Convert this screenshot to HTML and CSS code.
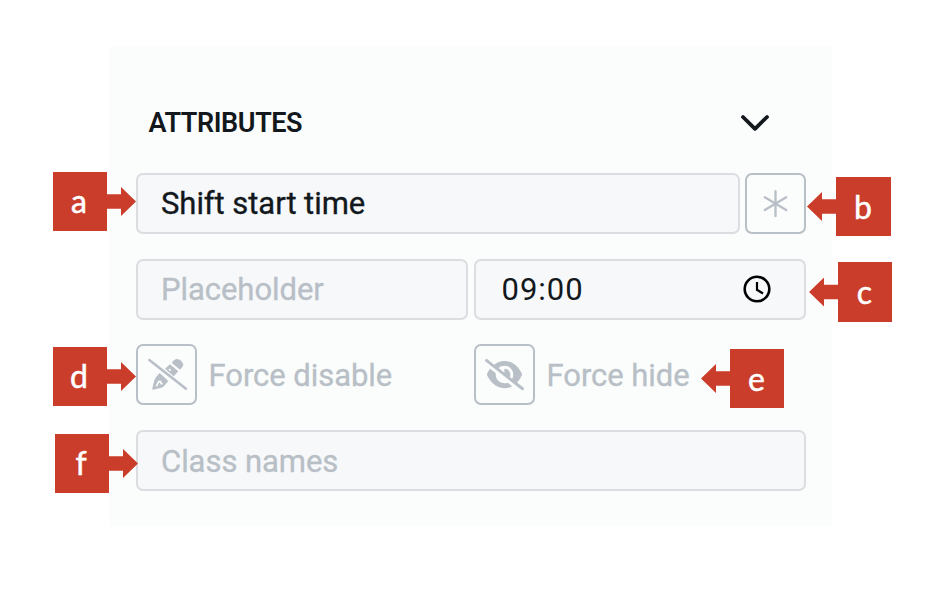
FILE: index.html
```html
<!DOCTYPE html>
<html lang="en">
<head>
<meta charset="utf-8">
<title>Attributes</title>
<link rel="stylesheet" href="styles.css">
</head>
<body>
<main class="panel">
  <header class="head">
    <h2 class="title">ATTRIBUTES</h2>
    <svg class="chevron" viewBox="0 0 30 18"><path d="M3 3 15 14.8 27 3"/></svg>
  </header>
  <div class="row label-row">
    <div class="field"><span>Shift start time</span></div>
    <div class="toggle"><svg viewBox="0 0 57 57"><path class="star" d="M28.500 16.200v25M17.800 22.300l21.400 12.800M39.200 22.300L17.800 35.100"/></svg></div>
  </div>
  <div class="row halves">
    <div class="field muted"><span>Placeholder</span></div>
    <div class="field time"><span>09:00</span>
      <svg class="clock" viewBox="0 0 28 28"><circle cx="14" cy="14" r="12.3"/><path d="M14 7v7.8l6 3.7"/></svg>
    </div>
  </div>
  <div class="row halves">
    <div class="option">
      <div class="toggle"><svg viewBox="21 35 171 171">
        <path class="solid" d="M122 85 129 78Q139 70 150 79Q161 89 154 98L147 106Z"/>
        <path class="solid" d="M117 90 142 111 128 126 102 103Z"/>
        <path class="gap" d="M114 104 119 109"/>
        <path class="solid" d="M86 116 112 140 100 154Q96 159 88 161L66 166Q63 166 64 162L70 138Q72 132 76 127Z"/>
        <path class="gap" d="M76 156 83 142 89 142 90 148 95 149"/>
        <path class="cut" d="M53 84 162 170"/>
        <path class="slash" d="M55 77 165 163"/>
      </svg></div>
      <span>Force disable</span>
    </div>
    <div class="option">
      <div class="toggle"><svg class="eye" viewBox="0 0 640 512"><path class="solid" d="M38.800 5.100C28.400-3.100 13.300-1.200 5.100 9.200S-1.200 34.700 9.200 42.900l592 464c10.400 8.200 25.500 6.300 33.700-4.100s6.300-25.500-4.100-33.700L525.600 386.700c39.600-40.600 66.400-86.100 79.900-118.400c3.300-7.900 3.300-16.700 0-24.600c-14.900-35.700-46.200-87.700-93-131.100C465.500 68.800 400.800 32 320 32c-68.200 0-125 26.300-169.300 60.800L38.800 5.100zM223.100 149.500C248.600 126.200 282.700 112 320 112c79.500 0 144 64.500 144 144c0 24.900-6.300 48.300-17.400 68.700L408 294.500c8.400-19.300 10.600-41.400 4.800-63.300c-11.100-41.500-47.800-69.400-88.600-71.100c-5.800-.2-9.200 6.100-7.400 11.700c2.100 6.400 3.300 13.200 3.300 20.300c0 10.200-2.400 19.800-6.600 28.300l-90.300-70.800zM373 389.900c-16.400 6.500-34.300 10.100-53 10.100c-79.500 0-144-64.500-144-144c0-6.900 .5-13.600 1.400-20.200L83.100 161.500C60.300 191.200 44 220.800 34.500 243.700c-3.300 7.900-3.300 16.700 0 24.600c14.900 35.700 46.200 87.700 93 131.100C174.500 443.200 239.200 480 320 480c47.800 0 89.900-12.900 126.200-32.500L373 389.900z"/></svg></div>
      <span>Force hide</span>
    </div>
  </div>
  <div class="row">
    <div class="field muted"><span>Class names</span></div>
  </div>
</main>
<div class="callout right at-a"><b>a</b><i></i></div>
<div class="callout left at-b"><i></i><b>b</b></div>
<div class="callout left at-c"><i></i><b>c</b></div>
<div class="callout right at-d"><b>d</b><i></i></div>
<div class="callout left at-e"><i></i><b>e</b></div>
<div class="callout right at-f"><b>f</b><i></i></div>
</body>
</html>
```
FILE: styles.css
```css
* { box-sizing: border-box; }
body {
  margin: 0;
  padding: 46px 0 0 110px;
  width: 928px;
  height: 590px;
  overflow: hidden;
  position: relative;
  background: #fff;
  color: #12181c;
  font-family: Roboto, sans-serif;
  font-size: 31px;
  line-height: 36px;
}
.panel {
  width: 722px;
  height: 480px;
  padding: 58px 26px 0 25.500px;
  background: #fbfdfc;
  display: flex;
  flex-direction: column;
  gap: 24.800px;
}
.head {
  height: 44px;
  padding: 0 36.500px 0 13px;
  display: flex;
  align-items: flex-start;
  justify-content: space-between;
}
.title { margin: 0; font-size: 27px; font-weight: 600; line-height: 38px; letter-spacing: -0.420px; }
.chevron { width: 30px; height: 18px; margin-top: 10px; }
.chevron path { fill: none; stroke: #12181c; stroke-width: 3.800; stroke-linecap: round; stroke-linejoin: round; }
.row { display: flex; gap: 5.500px; height: 61px; flex: none; }
.halves { display: grid; grid-template-columns: 1fr 1fr; }
.field {
  flex: 1;
  height: 61px;
  display: flex;
  align-items: center;
  padding: 0 23.500px;
  border: 2px solid #dbdde1;
  border-radius: 7px;
  background: #f7f8fa;
}
.field span, .option span { padding-top: 2px; letter-spacing: -0.050px; -webkit-text-stroke: 0.350px currentColor; }
.time { justify-content: space-between; padding: 0 33px 0 26px; }
.field.time span { padding-top: 1px; letter-spacing: 1px; -webkit-text-stroke: 0; }
.muted, .option { color: #b8bfc6; }
.toggle {
  width: 61px;
  height: 61px;
  flex: none;
  border: 2px solid #b8bfc6;
  border-radius: 7px;
  display: flex;
  align-items: center;
  justify-content: center;
}
.toggle svg { width: 57px; height: 57px; }
.toggle .eye { width: 39px; height: 31.200px; }
.solid { fill: #b8bfc6; }
.star, .slash { fill: none; stroke: #b8bfc6; stroke-width: 2.300; stroke-linecap: round; }
.slash { stroke-width: 7.500; }
.gap, .cut { fill: none; stroke: #fbfdfc; stroke-width: 5; }
.cut { stroke-width: 6; }
.option { display: flex; align-items: center; gap: 12px; }
.clock { width: 28px; height: 28px; fill: none; stroke: #000; stroke-width: 2.600; }
.clock path { stroke-width: 2.200; }
.callout {
  position: absolute;
  display: flex;
  align-items: center;
  height: 59px;
}
.callout b {
  width: 54px;
  height: 59px;
  padding-right: 2px;
  background: #ca3d2a;
  color: #fff;
  font: 400 32px/59px Lato, sans-serif;
  text-align: center;
  -webkit-text-stroke: 0.500px #fff;
}
.callout.left b { padding-right: 1px; }
.callout i {
  width: 30px;
  height: 29px;
  margin: 0 -1px;
  background: #ca3d2a;
  clip-path: polygon(0 25%, 50% 25%, 50% 0, 100% 50%, 50% 100%, 50% 75%, 0 75%);
}
.left i { clip-path: polygon(100% 25%, 50% 25%, 50% 0, 0 50%, 50% 100%, 50% 75%, 100% 75%); }
.at-a { left: 53px; top: 172px; }
.at-b { left: 808px; top: 177px; }
.callout.at-b b { width: 55px; }
.at-c { left: 810px; top: 262px; height: 60px; }
.at-c b { height: 60px; }
.at-d { left: 53px; top: 347px; }
.at-e { left: 702px; top: 349px; }
.at-f { left: 55px; top: 434px; }
.callout.at-a b, .callout.at-d b, .callout.at-f b { line-height: 58px; }
```
